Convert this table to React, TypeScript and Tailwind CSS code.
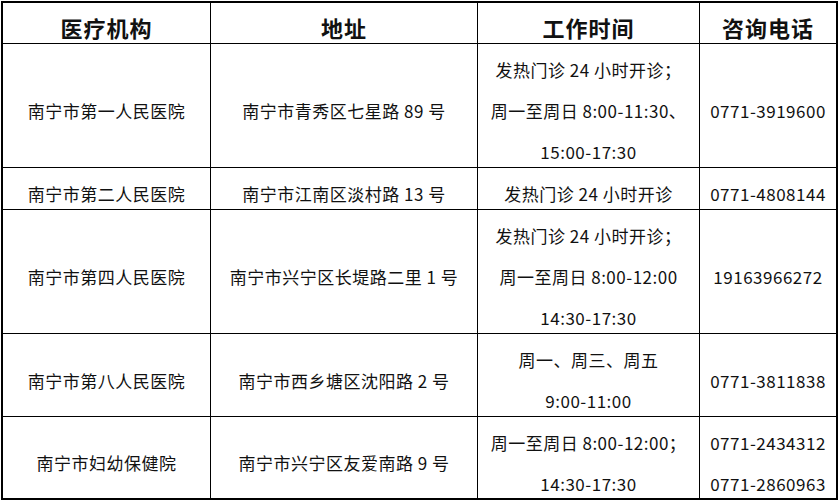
import { Fragment } from "react";

const rows = [
  {
    name: "南宁市第一人民医院",
    addr: "南宁市青秀区七星路 89 号",
    time: ["发热门诊 24 小时开诊；", "周一至周日 8:00-11:30、", "15:00-17:30"],
    phone: ["0771-3919600"],
  },
  {
    name: "南宁市第二人民医院",
    addr: "南宁市江南区淡村路 13 号",
    time: ["发热门诊 24 小时开诊"],
    phone: ["0771-4808144"],
  },
  {
    name: "南宁市第四人民医院",
    addr: "南宁市兴宁区长堤路二里 1 号",
    time: ["发热门诊 24 小时开诊；", "周一至周日 8:00-12:00", "14:30-17:30"],
    phone: ["19163966272"],
  },
  {
    name: "南宁市第八人民医院",
    addr: "南宁市西乡塘区沈阳路 2 号",
    time: ["周一、周三、周五", "9:00-11:00"],
    phone: ["0771-3811838"],
  },
  {
    name: "南宁市妇幼保健院",
    addr: "南宁市兴宁区友爱南路 9 号",
    time: ["周一至周日 8:00-12:00；", "14:30-17:30"],
    phone: ["0771-2434312", "0771-2860963"],
  },
];

const Cell = ({ lines }: { lines: string[] }) => (
  <div className="bg-white flex flex-col items-center justify-center pt-[10px] text-center">
    {lines.map((l, i) => (
      <div key={i} className="leading-[41px] whitespace-nowrap">
        {l}
      </div>
    ))}
  </div>
);

export default function App() {
  return (
    <div className="w-[839px] h-[502px] bg-white pt-px pl-px">
      <div
        className="w-[837px] bg-black p-[2px] grid gap-px grid-cols-[207px_266px_221px_136px] grid-rows-[40px_123px_41px_123px_82px_81px] text-[17px] text-[#111] tracking-[0.5px]"
        style={{ fontFamily: '"Noto Sans CJK SC", "Noto Sans", sans-serif' }}
      >
        {["医疗机构", "地址", "工作时间", "咨询电话"].map((h) => (
          <div
            key={h}
            className="bg-white flex items-center justify-center pt-[8px] text-[22px] font-bold tracking-[1px]"
          >
            {h}
          </div>
        ))}
        {rows.map((r) => (
          <Fragment key={r.name}>
            <Cell lines={[r.name]} />
            <Cell lines={[r.addr]} />
            <Cell lines={r.time} />
            <Cell lines={r.phone} />
          </Fragment>
        ))}
      </div>
    </div>
  );
}
